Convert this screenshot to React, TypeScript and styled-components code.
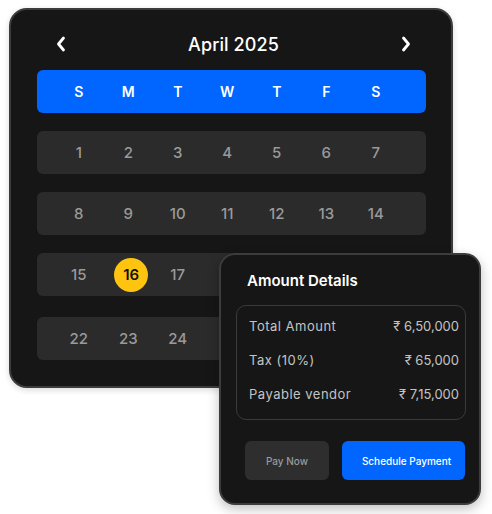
import React from "react";
import styled, { createGlobalStyle } from "styled-components";

const Global = createGlobalStyle`
  html, body { margin: 0; padding: 0; background: #ffffff; }
  body { font-family: Inter, "Open Sans", sans-serif; }
  * { box-sizing: border-box; }
`;

const Stage = styled.div`
  position: relative;
  width: 492px;
  height: 514px;
  padding: 8px 0 0 9px;
`;

const CalendarCard = styled.div`
  width: 444px;
  height: 380px;
  background: #161616;
  border: 2px solid #3c3c3c;
  border-radius: 18px;
  padding: 22px 25px 0 26px;
  box-shadow: 0 2px 6px rgba(0, 0, 0, 0.15);
`;

const Header = styled.div`
  display: grid;
  grid-template-columns: auto 1fr auto;
  align-items: center;
  height: 24px;
  padding: 0 14px 0 18px;
  margin-bottom: 14px;
`;

const Title = styled.div`
  text-align: center;
  color: #ffffff;
  font-size: 18px;
  font-weight: 500;
  letter-spacing: 0.1px;
`;

const NavButton = styled.button`
  display: flex;
  align-items: center;
  justify-content: center;
  width: 12px;
  height: 20px;
  padding: 0;
  background: none;
  border: none;
  color: #ffffff;
`;

const WeekBar = styled.div`
  display: grid;
  grid-template-columns: repeat(7, 49.5px);
  align-items: center;
  height: 43px;
  padding-left: 17px;
  background: #0066ff;
  border-radius: 6px;
  margin-bottom: 18px;
`;

const WeekDay = styled.div`
  text-align: center;
  color: #ffffff;
  font-size: 14px;
  font-weight: 600;
`;

const WeekRow = styled.div<{ $gap: number }>`
  display: grid;
  grid-template-columns: repeat(7, 49.5px);
  align-items: center;
  height: 43px;
  padding-left: 17px;
  background: #2b2b2b;
  border-radius: 6px;
  margin-bottom: ${(p) => p.$gap}px;
`;

const Day = styled.div<{ $selected?: boolean }>`
  justify-self: center;
  display: flex;
  align-items: center;
  justify-content: center;
  width: 34px;
  height: 34px;
  border-radius: 50%;
  font-size: 15px;
  font-weight: ${(p) => (p.$selected ? 600 : 500)};
  color: ${(p) => (p.$selected ? "#111111" : "#9a9a9a")};
  background: ${(p) => (p.$selected ? "#ffc40f" : "transparent")};
  margin-left: ${(p) => (p.$selected ? 6 : 0)}px;
`;

const AmountCard = styled.div`
  position: absolute;
  left: 219px;
  top: 253px;
  width: 262px;
  height: 252px;
  background: #161616;
  border: 2px solid #3c3c3c;
  border-radius: 16px;
  padding: 16px 13px 0 15px;
  box-shadow: 0 4px 12px rgba(0, 0, 0, 0.25);
`;

const CardTitle = styled.div`
  color: #ffffff;
  font-size: 15px;
  font-weight: 600;
  line-height: 20px;
  padding-left: 11px;
  margin-bottom: 14px;
`;

const DetailBox = styled.div`
  display: flex;
  flex-direction: column;
  gap: 14px;
  border: 1px solid #3a3a3a;
  border-radius: 10px;
  padding: 10px 6px 15px 12px;
  margin-bottom: 21px;
`;

const DetailRow = styled.div`
  display: flex;
  justify-content: space-between;
  align-items: center;
  line-height: 20px;
  font-size: 13px;
  color: #c4c4c4;
`;

const Label = styled.span`
  letter-spacing: 0.5px;
`;

const Actions = styled.div`
  display: flex;
  gap: 13px;
  padding-left: 9px;
`;

const ActionButton = styled.button<{ $primary?: boolean; $width: number }>`
  width: ${(p) => p.$width}px;
  height: 39px;
  border: none;
  border-radius: 6px;
  font-family: inherit;
  font-size: 10px;
  font-weight: 500;
  padding: 0 0 0 ${(p) => (p.$primary ? 6 : 0)}px;
  color: ${(p) => (p.$primary ? "#ffffff" : "#9a9a9a")};
  background: ${(p) => (p.$primary ? "#0066ff" : "#2e2e2e")};
`;

const Chevron = ({ dir }: { dir: "left" | "right" }) => (
  <svg width="10" height="16" viewBox="0 0 10 16" fill="none">
    <path
      d={dir === "left" ? "M7.5 2 L2.5 8 L7.5 14" : "M2.5 2 L7.5 8 L2.5 14"}
      stroke="currentColor"
      strokeWidth="2.8"
      strokeLinecap="round"
      strokeLinejoin="round"
    />
  </svg>
);

const weekDays = ["S", "M", "T", "W", "T", "F", "S"];
const weeks: (number | null)[][] = [
  [1, 2, 3, 4, 5, 6, 7],
  [8, 9, 10, 11, 12, 13, 14],
  [15, 16, 17, null, null, null, null],
  [22, 23, 24, null, null, null, null],
];

const details = [
  { label: "Total Amount", value: "₹ 6,50,000" },
  { label: "Tax (10%)", value: "₹ 65,000" },
  { label: "Payable vendor", value: "₹ 7,15,000" },
];

export default function App() {
  return (
    <>
      <Global />
      <Stage>
        <CalendarCard>
          <Header>
            <NavButton aria-label="Previous month">
              <Chevron dir="left" />
            </NavButton>
            <Title>April 2025</Title>
            <NavButton aria-label="Next month">
              <Chevron dir="right" />
            </NavButton>
          </Header>
          <WeekBar>
            {weekDays.map((d, i) => (
              <WeekDay key={i}>{d}</WeekDay>
            ))}
          </WeekBar>
          {weeks.map((w, i) => (
            <WeekRow key={i} $gap={i === 2 ? 21 : 18}>
              {w.map((d, j) => (
                <Day key={j} $selected={d === 16}>
                  {d}
                </Day>
              ))}
            </WeekRow>
          ))}
        </CalendarCard>
        <AmountCard>
          <CardTitle>Amount Details</CardTitle>
          <DetailBox>
            {details.map((r) => (
              <DetailRow key={r.label}>
                <Label>{r.label}</Label>
                <span>{r.value}</span>
              </DetailRow>
            ))}
          </DetailBox>
          <Actions>
            <ActionButton $width={84}>Pay Now</ActionButton>
            <ActionButton $width={123} $primary>
              Schedule Payment
            </ActionButton>
          </Actions>
        </AmountCard>
      </Stage>
    </>
  );
}
